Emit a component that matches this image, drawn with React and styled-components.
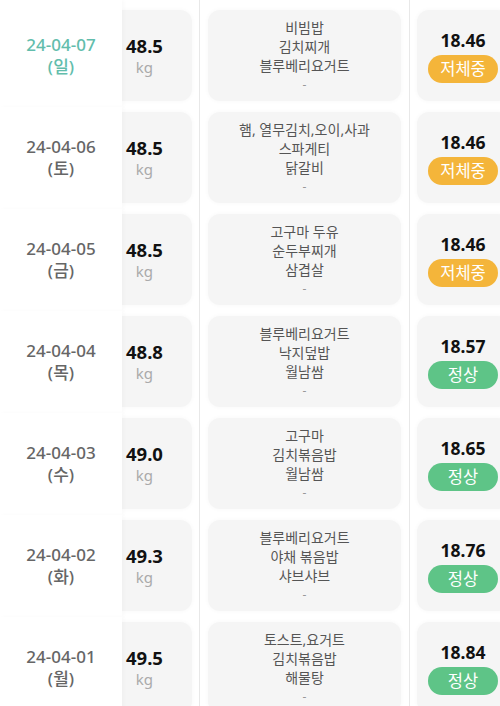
import styled, { createGlobalStyle } from "styled-components"

const Global = createGlobalStyle`
    body {
        margin: 0;
        background: #ffffff;
        overflow: hidden;
        font-family: "Noto Sans", "Noto Sans CJK KR", sans-serif;
    }
`

const Table = styled.div`
    width: 500px;
    height: 706px;
    overflow: hidden;
`

const Row = styled.div`
    display: flex;
    height: ${(p) => (p.$first ? 107 : 102)}px;
`

const DateCell = styled.div`
    position: relative;
    z-index: 1;
    width: 122px;
    flex-shrink: 0;
    padding: ${(p) => (p.$first ? 10 : 5)}px 0 6px;
    box-sizing: border-box;
    background: #ffffff;
    box-shadow: 2px 0 4px rgba(0, 0, 0, 0.025);
    display: flex;
    flex-direction: column;
    align-items: center;
    justify-content: center;
    font-size: 17px;
    font-weight: 500;
    line-height: 22px;
    color: ${(p) => (p.$today ? "#62bdac" : "#666666")};
`

const Cell = styled.div`
    flex-shrink: 0;
    box-sizing: border-box;
    padding: ${(p) => (p.$first ? 10 : 5)}px ${(p) => p.$right || 0}px 6px ${(p) => p.$left || 0}px;
    border-right: ${(p) => (p.$divider ? "1px solid #e8e8e8" : "none")};
    display: flex;
`

const Card = styled.div`
    width: ${(p) => p.$w}px;
    height: 91px;
    background: #f5f5f5;
    border-radius: ${(p) => (p.$cut ? "0 12px 12px 0" : "12px")};
    box-shadow: 0 0 5px rgba(0, 0, 0, 0.035);
    display: flex;
    flex-direction: column;
    justify-content: center;
    align-items: ${(p) => p.$align || "center"};
`

const WeightBox = styled.div`
    margin-left: 4px;
    display: flex;
    flex-direction: column;
    align-items: center;
`

const Weight = styled.span`
    font-size: 18.5px;
    font-weight: 700;
    line-height: 22px;
    color: #111111;
`

const Unit = styled.span`
    font-size: 15px;
    line-height: 20px;
    color: #aaaaaa;
`

const Meal = styled.span`
    font-size: 14px;
    line-height: 19px;
    color: #555555;
    text-align: center;
    white-space: nowrap;
`

const Dash = styled(Meal)`
    font-size: 12px;
    color: #999999;
`

const Bmi = styled.span`
    font-size: 17.5px;
    font-weight: 700;
    line-height: 24px;
    color: #111111;
    margin-bottom: 3px;
`

const Badge = styled.span`
    width: 70px;
    height: 28px;
    border-radius: 14px;
    background: ${(p) => (p.$low ? "#f4b53a" : "#5ec487")};
    color: #ffffff;
    font-size: 16.5px;
    line-height: 28px;
    text-align: center;
`

const rows = [
    { date: "24-04-07", day: "일", kg: "48.5", meals: ["비빔밥", "김치찌개", "블루베리요거트"], bmi: "18.46", low: true },
    { date: "24-04-06", day: "토", kg: "48.5", meals: ["햄, 열무김치,오이,사과", "스파게티", "닭갈비"], bmi: "18.46", low: true },
    { date: "24-04-05", day: "금", kg: "48.5", meals: ["고구마 두유", "순두부찌개", "삼겹살"], bmi: "18.46", low: true },
    { date: "24-04-04", day: "목", kg: "48.8", meals: ["블루베리요거트", "낙지덮밥", "월남쌈"], bmi: "18.57", low: false },
    { date: "24-04-03", day: "수", kg: "49.0", meals: ["고구마", "김치볶음밥", "월남쌈"], bmi: "18.65", low: false },
    { date: "24-04-02", day: "화", kg: "49.3", meals: ["블루베리요거트", "야채 볶음밥", "샤브샤브"], bmi: "18.76", low: false },
    { date: "24-04-01", day: "월", kg: "49.5", meals: ["토스트,요거트", "김치볶음밥", "해물탕"], bmi: "18.84", low: false },
]

export default function App() {
    return (
        <>
            <Global />
            <Table>
                {rows.map((r, i) => (
                    <Row key={r.date} $first={i === 0}>
                        <DateCell $first={i === 0} $today={i === 0}>
                            <span>{r.date}</span>
                            <span>({r.day})</span>
                        </DateCell>
                        <Cell $first={i === 0} $right={7} $divider style={{ width: 78 }}>
                            <Card $w={70} $cut $align="flex-start">
                                <WeightBox>
                                    <Weight>{r.kg}</Weight>
                                    <Unit>kg</Unit>
                                </WeightBox>
                            </Card>
                        </Cell>
                        <Cell $first={i === 0} $left={8} $right={8} $divider style={{ width: 210 }}>
                            <Card $w={193}>
                                {r.meals.map((m) => (
                                    <Meal key={m}>{m}</Meal>
                                ))}
                                <Dash>-</Dash>
                            </Card>
                        </Cell>
                        <Cell $first={i === 0} $left={7}>
                            <Card $w={92}>
                                <Bmi>{r.bmi}</Bmi>
                                <Badge $low={r.low}>{r.low ? "저체중" : "정상"}</Badge>
                            </Card>
                        </Cell>
                    </Row>
                ))}
            </Table>
        </>
    )
}
